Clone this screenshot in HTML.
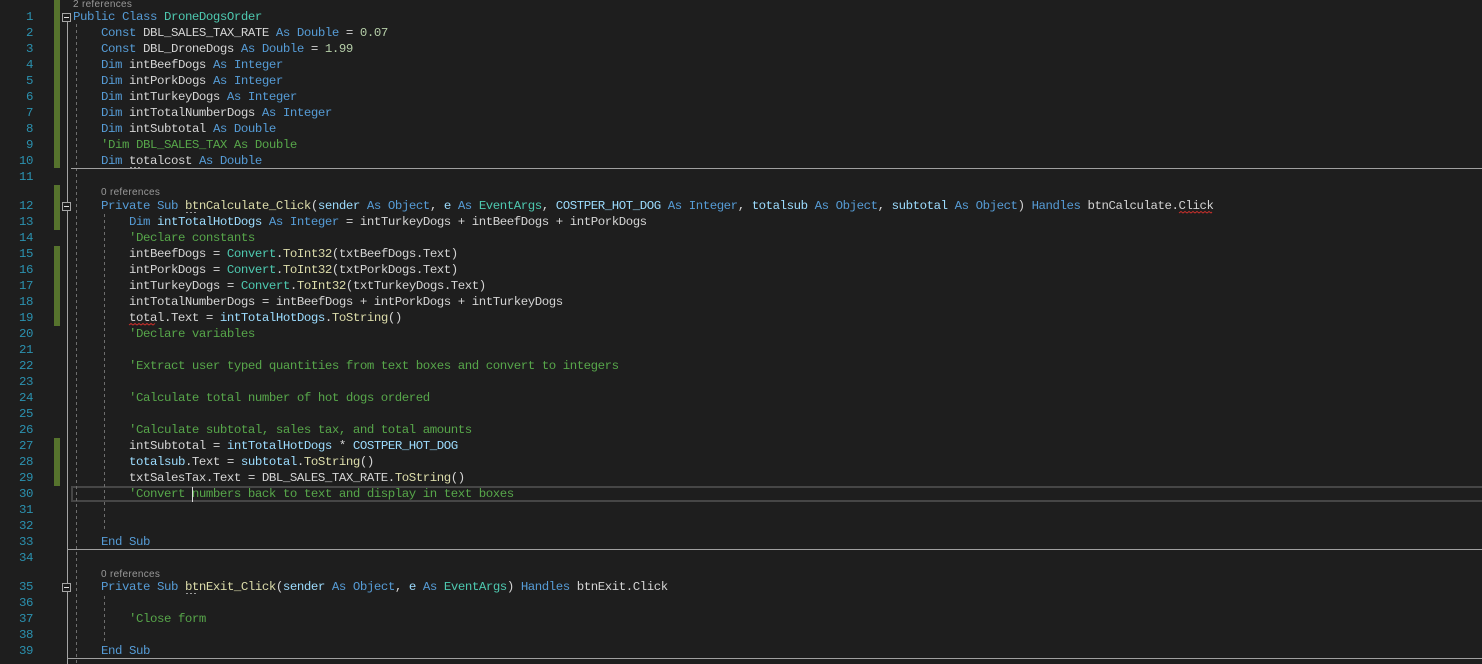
<!DOCTYPE html>
<html><head><meta charset="utf-8"><style>
html,body{margin:0;padding:0;background:#1e1e1e}
#e{position:relative;width:1482px;height:664px;overflow:hidden;background:#1e1e1e;font:12.4px/16px "Liberation Mono",monospace;letter-spacing:-.44px;color:#d4d4d4}
.l{position:absolute;left:73px;height:16px;white-space:pre}
.n{position:absolute;left:0;width:33px;text-align:right;height:16px;color:#2b91af}
.k{color:#569cd6}.t{color:#4ec9b0}.c{color:#57a64a}.u{color:#b5cea8}.f{color:#dcdcaa}.p{color:#9cdcfe}
.g{position:absolute;left:54px;width:6px;background:#56732d}
.r{position:absolute;font:10px/12px "Liberation Sans",sans-serif;letter-spacing:.3px;color:#999}
.s{position:absolute;height:1px;right:0;background:#a0a0a0}
.b{position:absolute;left:62px;width:7px;height:7px;border:1px solid #a5a5a5;background:#1e1e1e}
.b i{position:absolute;left:1px;top:3px;width:5px;height:1px;background:#e0e0e0}
</style></head><body><div id="e">
<div class="g" style="top:0;height:168px"></div>
<div class="g" style="top:185px;height:45px"></div>
<div class="g" style="top:246px;height:80px"></div>
<div class="g" style="top:438px;height:48px"></div>
<div style="position:absolute;left:71px;right:-4px;top:486px;height:12px;border:2px solid #464646"></div>
<div style="position:absolute;left:67px;top:22px;width:1px;height:642px;background:#a5a5a5"></div>
<svg style="position:absolute;left:0;top:0" width="1482" height="664" fill="none">
<path d="M76.5 24V664M104.5 214V530M104.5 596V642" stroke="#6e6e6e" stroke-dasharray="3 3"/>
</svg>
<div class="s" style="left:71px;top:168px"></div>
<div class="s" style="left:67px;top:549px"></div>
<div class="s" style="left:67px;top:658px"></div>
<div style="position:absolute;left:192px;top:487px;width:1px;height:15px;background:#dcdcdc"></div>
<div class="b" style="top:13px"><i></i></div>
<div class="b" style="top:202px"><i></i></div>
<div class="b" style="top:583px"><i></i></div>
<div class="r" style="left:73px;top:-3px;margin-top:2px">2 references</div>
<div class="r" style="left:101px;top:187px">0 references</div>
<div class="r" style="left:101px;top:569px">0 references</div>
<svg style="position:absolute;left:0;top:0" width="1482" height="664" fill="none">
<path d="M1179 213l2 -1.5 2 1.5 2 -1.5 2 1.5 2 -1.5 2 1.5 2 -1.5 2 1.5 2 -1.5 2 1.5 2 -1.5 2 1.5 2 -1.5 2 1.5 2 -1.5 2 1.5 1 -1" stroke="#c8302c"/>
<path d="M129 325l2 -1.5 2 1.5 2 -1.5 2 1.5 2 -1.5 2 1.5 2 -1.5 2 1.5 2 -1.5 2 1.5 2 -1.5 2 1.5 2 -1.5" stroke="#c8302c"/>
<path d="M130 167.5h10M186 212.5h10M186 593.5h10" stroke="#9a9a9a" stroke-dasharray="2 2"/>
</svg>
<div class="n" style="top:9px">1</div><div class="l" style="top:9px"><span class="k">Public Class </span><span class="t">DroneDogsOrder</span></div>
<div class="n" style="top:25px">2</div><div class="l" style="top:25px">    <span class="k">Const</span> DBL_SALES_TAX_RATE <span class="k">As Double</span> = <span class="u">0.07</span></div>
<div class="n" style="top:41px">3</div><div class="l" style="top:41px">    <span class="k">Const</span> DBL_DroneDogs <span class="k">As Double</span> = <span class="u">1.99</span></div>
<div class="n" style="top:57px">4</div><div class="l" style="top:57px">    <span class="k">Dim</span> intBeefDogs <span class="k">As Integer</span></div>
<div class="n" style="top:73px">5</div><div class="l" style="top:73px">    <span class="k">Dim</span> intPorkDogs <span class="k">As Integer</span></div>
<div class="n" style="top:89px">6</div><div class="l" style="top:89px">    <span class="k">Dim</span> intTurkeyDogs <span class="k">As Integer</span></div>
<div class="n" style="top:105px">7</div><div class="l" style="top:105px">    <span class="k">Dim</span> intTotalNumberDogs <span class="k">As Integer</span></div>
<div class="n" style="top:121px">8</div><div class="l" style="top:121px">    <span class="k">Dim</span> intSubtotal <span class="k">As Double</span></div>
<div class="n" style="top:137px">9</div><div class="l" style="top:137px">    <span class="c">'Dim DBL_SALES_TAX As Double</span></div>
<div class="n" style="top:153px">10</div><div class="l" style="top:153px">    <span class="k">Dim</span> totalcost <span class="k">As Double</span></div>
<div class="n" style="top:169px">11</div>
<div class="n" style="top:198px">12</div><div class="l" style="top:198px">    <span class="k">Private Sub</span> <span class="f">btnCalculate_Click</span>(<span class="p">sender</span> <span class="k">As Object</span>, <span class="p">e</span> <span class="k">As</span> <span class="t">EventArgs</span>, <span class="p">COSTPER_HOT_DOG</span> <span class="k">As Integer</span>, <span class="p">totalsub</span> <span class="k">As Object</span>, <span class="p">subtotal</span> <span class="k">As Object</span>) <span class="k">Handles</span> btnCalculate.Click</div>
<div class="n" style="top:214px">13</div><div class="l" style="top:214px">        <span class="k">Dim</span> <span class="p">intTotalHotDogs</span> <span class="k">As Integer</span> = intTurkeyDogs + intBeefDogs + intPorkDogs</div>
<div class="n" style="top:230px">14</div><div class="l" style="top:230px">        <span class="c">'Declare constants</span></div>
<div class="n" style="top:246px">15</div><div class="l" style="top:246px">        intBeefDogs = <span class="t">Convert</span>.<span class="f">ToInt32</span>(txtBeefDogs.Text)</div>
<div class="n" style="top:262px">16</div><div class="l" style="top:262px">        intPorkDogs = <span class="t">Convert</span>.<span class="f">ToInt32</span>(txtPorkDogs.Text)</div>
<div class="n" style="top:278px">17</div><div class="l" style="top:278px">        intTurkeyDogs = <span class="t">Convert</span>.<span class="f">ToInt32</span>(txtTurkeyDogs.Text)</div>
<div class="n" style="top:294px">18</div><div class="l" style="top:294px">        intTotalNumberDogs = intBeefDogs + intPorkDogs + intTurkeyDogs</div>
<div class="n" style="top:310px">19</div><div class="l" style="top:310px">        total.Text = <span class="p">intTotalHotDogs</span>.<span class="f">ToString</span>()</div>
<div class="n" style="top:326px">20</div><div class="l" style="top:326px">        <span class="c">'Declare variables</span></div>
<div class="n" style="top:342px">21</div>
<div class="n" style="top:358px">22</div><div class="l" style="top:358px">        <span class="c">'Extract user typed quantities from text boxes and convert to integers</span></div>
<div class="n" style="top:374px">23</div>
<div class="n" style="top:390px">24</div><div class="l" style="top:390px">        <span class="c">'Calculate total number of hot dogs ordered</span></div>
<div class="n" style="top:406px">25</div>
<div class="n" style="top:422px">26</div><div class="l" style="top:422px">        <span class="c">'Calculate subtotal, sales tax, and total amounts</span></div>
<div class="n" style="top:438px">27</div><div class="l" style="top:438px">        intSubtotal = <span class="p">intTotalHotDogs</span> * <span class="p">COSTPER_HOT_DOG</span></div>
<div class="n" style="top:454px">28</div><div class="l" style="top:454px">        <span class="p">totalsub</span>.Text = <span class="p">subtotal</span>.<span class="f">ToString</span>()</div>
<div class="n" style="top:470px">29</div><div class="l" style="top:470px">        txtSalesTax.Text = DBL_SALES_TAX_RATE.<span class="f">ToString</span>()</div>
<div class="n" style="top:486px">30</div><div class="l" style="top:486px">        <span class="c">'Convert numbers back to text and display in text boxes</span></div>
<div class="n" style="top:502px">31</div>
<div class="n" style="top:518px">32</div>
<div class="n" style="top:534px">33</div><div class="l" style="top:534px">    <span class="k">End Sub</span></div>
<div class="n" style="top:550px">34</div>
<div class="n" style="top:579px">35</div><div class="l" style="top:579px">    <span class="k">Private Sub</span> <span class="f">btnExit_Click</span>(<span class="p">sender</span> <span class="k">As Object</span>, <span class="p">e</span> <span class="k">As</span> <span class="t">EventArgs</span>) <span class="k">Handles</span> btnExit.Click</div>
<div class="n" style="top:595px">36</div>
<div class="n" style="top:611px">37</div><div class="l" style="top:611px">        <span class="c">'Close form</span></div>
<div class="n" style="top:627px">38</div>
<div class="n" style="top:643px">39</div><div class="l" style="top:643px">    <span class="k">End Sub</span></div>
</div></body></html>
